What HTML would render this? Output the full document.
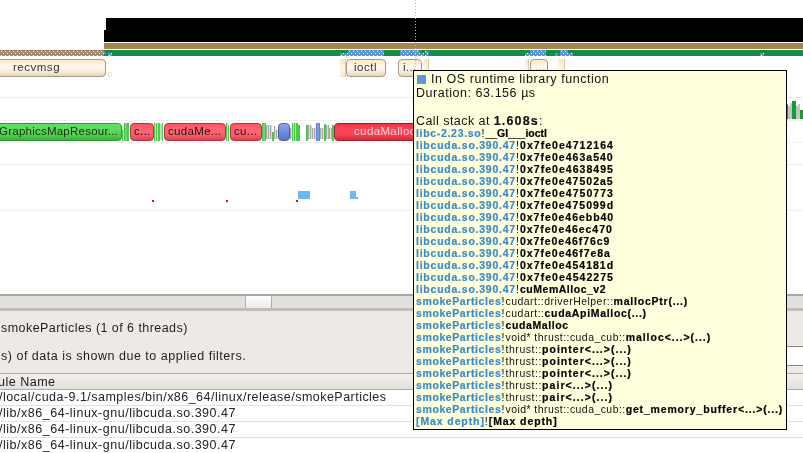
<!DOCTYPE html>
<html><head><meta charset="utf-8">
<style>
*{margin:0;padding:0;box-sizing:border-box}
html,body{width:803px;height:453px;overflow:hidden;background:#fff;position:relative;font-family:"Liberation Sans",sans-serif}
.a{position:absolute}
.os{position:absolute;top:59px;height:18px;border:1px solid #a89a80;border-radius:4px;background:linear-gradient(#fce8c8,#fffaf0 45%,#f5e8d4 78%,#e6d4b8);color:#333;font-size:11.5px;line-height:14px;text-align:left;overflow:hidden;white-space:nowrap}
.strip{position:absolute;top:59px;height:18px;background:linear-gradient(#fde6c4,#fff6ea 60%,#f2e2cc);border-right:1px solid #d8c6aa}
.cu{position:absolute;top:123px;height:18px;border-radius:4px;font-size:11.5px;line-height:15px;text-align:left;white-space:nowrap;overflow:hidden}
.g{border:1px solid #2f9a2f;background:linear-gradient(#66de66,#5ad65a 50%,#4cc44c 80%,#3cae3c);color:#143014}
.r{border:1px solid #b83040;background:linear-gradient(#ff5464,#ff6a78 45%,#f25a68 75%,#d84452);color:#2a1010}
.b{border:1px solid #4a5f9a;background:linear-gradient(#8aa4e8,#6a88d8 60%,#5a76c4)}
.sep{position:absolute;left:0;width:803px;height:1px;background:#ebebeb}
.tt{position:absolute;left:413px;top:70px;width:374px;height:360px;background:#ffffde;border:1px solid #000;overflow:hidden;white-space:nowrap}
.tt .l1{position:absolute;left:3px;font-size:12.5px;color:#111}
.st{position:absolute;left:2px;font-size:10.5px;color:#000;line-height:12px}
.st .m{font-weight:bold;color:#3b8ac6;-webkit-text-stroke:.2px #3b8ac6}
.st .fn{font-weight:bold;-webkit-text-stroke:.2px #000}
.st .ns{color:#111}
.row{position:absolute;left:0;width:803px;height:16px;border-bottom:1px solid #e2e2e2;font-size:12.5px;color:#222;white-space:nowrap}
</style></head><body><div style="position:absolute;left:0;top:0;width:803px;height:453px;will-change:transform">

<!-- vertical dotted cursor line -->


<!-- black bar -->
<div class="a" style="left:104px;top:18px;width:699px;height:24px;background:#000"></div>
<div class="a" style="left:104px;top:18px;width:2px;height:12px;background:#f4f4f4"></div>
<div class="a" style="left:415px;top:18px;width:1px;height:24px;background:repeating-linear-gradient(#888 0 1px,transparent 1px 3px)"></div>
<!-- brown bar -->
<div class="a" style="left:104px;top:43px;width:699px;height:6px;background:#a7874f"></div>
<!-- green bar -->
<div class="a" style="left:104px;top:50px;width:699px;height:6px;background:#188c46"></div>

<svg class="a" style="left:0;top:50px" width="803" height="7">
<defs>
<pattern id="pb" width="4" height="4" patternUnits="userSpaceOnUse"><rect width="4" height="4" fill="#a6856d"/><rect x="1" y="1" width="1" height="1" fill="#fff"/><rect x="3" y="3" width="1" height="1" fill="#fff"/></pattern>
<pattern id="pl" width="4" height="4" patternUnits="userSpaceOnUse"><rect width="4" height="4" fill="#5495d2"/><rect x="1" y="1" width="1" height="1" fill="#fff"/><rect x="3" y="3" width="1" height="1" fill="#fff"/></pattern>
</defs>
<rect x="0" y="0" width="104" height="6" fill="url(#pb)"/>
<rect x="104" y="2" width="2" height="2" fill="#5495d2"/>
<rect x="108" y="3" width="4" height="3" fill="url(#pl)"/>
<rect x="340" y="3" width="8" height="3" fill="url(#pl)"/>
<rect x="348" y="0" width="36" height="6" fill="url(#pl)"/>
<rect x="400" y="0" width="20" height="6" fill="url(#pl)"/>
<rect x="420" y="3" width="4" height="3" fill="url(#pl)"/>
<rect x="425" y="1" width="4" height="5" fill="url(#pl)"/>
<rect x="525" y="3" width="5" height="3" fill="url(#pl)"/>
<rect x="530" y="0" width="16" height="6" fill="url(#pl)"/>
<rect x="555" y="3" width="3" height="3" fill="#5495d2"/>
<rect x="560" y="0" width="8" height="6" fill="url(#pl)"/>
<rect x="568" y="3" width="5" height="3" fill="url(#pl)"/>
<rect x="760" y="3" width="4" height="3" fill="url(#pl)"/>
</svg>

<!-- OS runtime row -->
<div class="os" style="left:-6px;width:112px;padding-left:18px"><span style="letter-spacing:0.512px">recvmsg</span></div>
<div class="a" style="left:108px;top:72px;width:4px;height:5px;border:1px solid #f5ead8;border-left-color:#efe0c8"></div>
<div class="strip" style="left:340px;width:6px"></div>
<div class="os" style="left:346px;width:40px;padding-left:7px"><span style="letter-spacing:0.550px">ioctl</span></div>
<div class="os" style="left:398px;width:24px;text-align:left;padding-left:4px"><span style="letter-spacing:0.351px">i...</span></div>
<div class="strip" style="left:424px;width:5px"></div>
<div class="strip" style="left:525px;width:4px"></div>
<div class="os" style="left:530px;width:18px;padding-left:4px"><span style="letter-spacing:0.302px">...</span></div>
<div class="strip" style="left:558px;width:7px"></div>

<div class="a" style="left:415px;top:0;width:1px;height:70px;background:repeating-linear-gradient(#b8b8b8 0 1px,transparent 1px 3px)"></div>
<div class="sep" style="top:97px"></div>
<div class="sep" style="top:120px;background:#f0f0f0"></div>
<div class="sep" style="top:142px;background:#f2f2f2"></div>
<div class="sep" style="top:164px"></div>
<div class="sep" style="top:210px"></div>

<!-- CUDA row -->
<div class="cu g" style="left:-4px;width:126px;padding-left:2px"><span style="letter-spacing:0.237px">GraphicsMapResour...</span></div>
<div class="a" style="left:122px;top:130px;width:1px;height:11px;background:#4cc84c"></div>
<div class="a" style="left:123px;top:130px;width:1px;height:11px;background:#cfcfcf"></div>
<div class="a" style="left:124px;top:123px;width:4px;height:18px;background:linear-gradient(90deg,#3cb83c,#7ae27a 50%,#3cb83c)"></div>
<div class="a" style="left:128px;top:123px;width:1px;height:18px;background:#4cc84c"></div>
<div class="a" style="left:154px;top:123px;width:1px;height:18px;background:#4cc84c"></div>
<div class="a" style="left:155px;top:123px;width:1px;height:18px;background:#d8d8d8"></div>
<div class="a" style="left:156px;top:123px;width:1px;height:18px;background:#4cc84c"></div>
<div class="a" style="left:157px;top:123px;width:1px;height:18px;background:#d8d8d8"></div>
<div class="a" style="left:158px;top:123px;width:2px;height:18px;background:#4cc84c"></div>
<div class="a" style="left:160px;top:124px;width:2px;height:16px;background:#d0d0d0"></div>
<div class="a" style="left:162px;top:123px;width:1px;height:18px;background:#4cc84c"></div>
<div class="a" style="left:226px;top:123px;width:1px;height:18px;background:#4cc84c"></div>
<div class="a" style="left:227px;top:123px;width:1px;height:18px;background:#d8d8d8"></div>
<div class="a" style="left:228px;top:125px;width:1px;height:16px;background:#4cc84c"></div>
<div class="a" style="left:262px;top:123px;width:4px;height:18px;background:linear-gradient(90deg,#3cb83c,#7ae27a 50%,#3cb83c)"></div>
<div class="a" style="left:266px;top:125px;width:6px;height:14px;background:repeating-linear-gradient(90deg,#aaa 0 1px,#dcdcdc 1px 2px)"></div>
<div class="a" style="left:272px;top:132px;width:2px;height:9px;background:#4cc84c"></div>
<div class="a" style="left:274px;top:126px;width:2px;height:13px;background:repeating-linear-gradient(90deg,#aaa 0 1px,#dcdcdc 1px 2px)"></div>
<div class="a" style="left:276px;top:130px;width:2px;height:9px;background:repeating-linear-gradient(90deg,#aaa 0 1px,#dcdcdc 1px 2px)"></div>
<div class="a" style="left:290px;top:128px;width:2px;height:11px;background:repeating-linear-gradient(90deg,#aaa 0 1px,#dcdcdc 1px 2px)"></div>
<div class="a" style="left:292px;top:123px;width:1px;height:18px;background:#4cc84c"></div>
<div class="a" style="left:293px;top:123px;width:1px;height:18px;background:#d0d0d0"></div>
<div class="a" style="left:294px;top:123px;width:1px;height:18px;background:#4cc84c"></div>
<div class="a" style="left:295px;top:123px;width:1px;height:18px;background:#d0d0d0"></div>
<div class="a" style="left:296px;top:123px;width:2px;height:18px;background:#4cc84c"></div>
<div class="a" style="left:298px;top:125px;width:2px;height:16px;background:#4cc84c"></div>
<div class="a" style="left:306px;top:125px;width:2px;height:16px;background:#4cc84c"></div>
<div class="a" style="left:308px;top:125px;width:4px;height:14px;background:repeating-linear-gradient(90deg,#aaa 0 1px,#dcdcdc 1px 2px)"></div>
<div class="a" style="left:312px;top:128px;width:4px;height:11px;background:repeating-linear-gradient(90deg,#aaa 0 1px,#dcdcdc 1px 2px)"></div>
<div class="a" style="left:316px;top:123px;width:4px;height:18px;background:linear-gradient(90deg,#5a78c8,#8aa6ee 50%,#5a78c8)"></div>
<div class="a" style="left:320px;top:128px;width:4px;height:11px;background:repeating-linear-gradient(90deg,#aaa 0 1px,#dcdcdc 1px 2px)"></div>
<div class="a" style="left:324px;top:124px;width:2px;height:17px;background:#4cc84c"></div>
<div class="a" style="left:326px;top:125px;width:3px;height:14px;background:repeating-linear-gradient(90deg,#aaa 0 1px,#dcdcdc 1px 2px)"></div>
<div class="a" style="left:329px;top:128px;width:3px;height:11px;background:repeating-linear-gradient(90deg,#aaa 0 1px,#dcdcdc 1px 2px)"></div>
<div class="a" style="left:332px;top:125px;width:2px;height:16px;background:#4cc84c"></div>
<div class="cu r" style="left:130px;width:24px;padding-left:3px"><span style="letter-spacing:0.301px">c...</span></div>
<div class="cu r" style="left:164px;width:62px;padding-left:3px"><span style="letter-spacing:0.333px">cudaMe...</span></div>
<div class="cu r" style="left:230px;width:32px;padding-left:3px"><span style="letter-spacing:0.356px">cu...</span></div>
<div class="cu b" style="left:278px;width:12px"></div>
<div class="cu r" style="left:334px;width:90px;border-color:#a01c2c;background:linear-gradient(#f23448,#ff4858 45%,#f03c4c 75%,#cc2c3c);color:#ffd4d8;text-align:left;padding-left:19px"><span style="letter-spacing:0.370px">cudaMalloc</span></div>

<!-- right side bars -->
<div class="a" style="left:787px;top:104px;width:1px;height:15px;background:#10a030"></div>
<div class="a" style="left:788px;top:106px;width:2px;height:13px;background:#c4c0c4"></div>
<div class="a" style="left:790px;top:103px;width:2px;height:16px;background:#c8c4c8"></div>
<div class="a" style="left:792px;top:101px;width:4px;height:18px;background:#10a030"></div>
<div class="a" style="left:796px;top:106px;width:2px;height:13px;background:#c4c0c4"></div>
<div class="a" style="left:798px;top:104px;width:2px;height:15px;background:#c8c4c8"></div>
<div class="a" style="left:800px;top:110px;width:3px;height:9px;background:#10a030"></div>

<!-- marks -->
<div class="a" style="left:152px;top:200px;width:2px;height:2px;background:#f00"></div>
<div class="a" style="left:226px;top:200px;width:2px;height:2px;background:#f00"></div>
<div class="a" style="left:296px;top:200px;width:2px;height:2px;background:#f00"></div>
<div class="a" style="left:298px;top:191px;width:12px;height:8px;background:#6cb8f8"></div>
<div class="a" style="left:350px;top:191px;width:6px;height:8px;background:#6cb8f8"></div>
<div class="a" style="left:356px;top:197px;width:2px;height:2px;background:#6cb8f8"></div>

<!-- scrollbar -->
<div class="a" style="left:0;top:294px;width:803px;height:2px;background:#aaa7a3"></div>
<div class="a" style="left:0;top:296px;width:803px;height:12px;background:#e2e0dc"></div>
<div class="a" style="left:0;top:308px;width:803px;height:3px;background:#bdbdbd"></div>
<div class="a" style="left:245px;top:296px;width:27px;height:12px;border-left:1px solid #b4b0ac;border-right:1px solid #b4b0ac;background:linear-gradient(#fdfdfd,#f0ece8)"></div>

<!-- panel -->
<div class="a" style="left:0;top:311px;width:803px;height:62px;background:#edeae6"></div>
<div class="a" style="left:1px;top:321px;font-size:12.5px;color:#1e1e1e;white-space:nowrap"><span style="letter-spacing:0.446px">smokeParticles (1 of 6 threads)</span></div>
<div class="a" style="left:1px;top:349px;font-size:12.5px;color:#1e1e1e;white-space:nowrap"><span style="letter-spacing:0.514px">s) of data is shown due to applied filters.</span></div>

<div class="a" style="left:787px;top:346px;width:16px;height:20px;border-top:1px solid #8c8a88;border-bottom:1px solid #8c8a88;background:#fff"></div>
<!-- table -->
<div class="a" style="left:0;top:373px;width:803px;height:17px;border-top:1px solid #b0aca6;border-bottom:1px solid #b0aca6;background:linear-gradient(#f3f1ee,#e4e1dc)"></div>
<div class="a" style="left:-2px;top:375px;font-size:12.5px;color:#222;white-space:nowrap"><span style="letter-spacing:0.505px">ule Name</span></div>
<div class="a" style="left:0;top:390px;width:803px;height:63px;background:#fff"></div>
<div class="row" style="top:389px;height:17px"><span class="a" style="left:-1px;top:1px"><span style="letter-spacing:0.471px">/local/cuda-9.1/samples/bin/x86_64/linux/release/smokeParticles</span></span></div>
<div class="row" style="top:406px"><span class="a" style="left:-1px;top:0px"><span style="letter-spacing:0.517px">/lib/x86_64-linux-gnu/libcuda.so.390.47</span></span></div>
<div class="row" style="top:422px"><span class="a" style="left:-1px;top:0px"><span style="letter-spacing:0.517px">/lib/x86_64-linux-gnu/libcuda.so.390.47</span></span></div>
<div class="row" style="top:438px"><span class="a" style="left:-1px;top:0px"><span style="letter-spacing:0.517px">/lib/x86_64-linux-gnu/libcuda.so.390.47</span></span></div>

<!-- tooltip -->
<div class="tt">
<div class="a" style="left:3px;top:4px;width:9px;height:9px;background:#5b9bd5"></div>
<div class="l1" style="left:17px;top:1px"><span style="letter-spacing:0.549px">In OS runtime library function</span></div>
<div class="l1" style="left:2px;top:15px"><span style="letter-spacing:0.543px">Duration: 63.156 µs</span></div>
<div class="l1" style="left:2px;top:43px"><span style="letter-spacing:0.443px">Call stack at </span><b style="-webkit-text-stroke:.2px #111"><span style="letter-spacing:1.145px">1.608s</span></b><span style="letter-spacing:0.570px">:</span></div>
<div class="st" style="top:56px"><span class="m"><span style="letter-spacing:0.683px">libc-2.23.so</span></span><span class="ex"><span style="letter-spacing:1.092px">!</span></span><span class="fn"><span style="letter-spacing:-0.042px">__GI___ioctl</span></span></div>
<div class="st" style="top:68px"><span class="m"><span style="letter-spacing:0.766px">libcuda.so.390.47</span></span><span class="ex"><span style="letter-spacing:1.092px">!</span></span><span class="fn"><span style="letter-spacing:1.038px">0x7fe0e4712164</span></span></div>
<div class="st" style="top:80px"><span class="m"><span style="letter-spacing:0.766px">libcuda.so.390.47</span></span><span class="ex"><span style="letter-spacing:1.092px">!</span></span><span class="fn"><span style="letter-spacing:1.023px">0x7fe0e463a540</span></span></div>
<div class="st" style="top:92px"><span class="m"><span style="letter-spacing:0.766px">libcuda.so.390.47</span></span><span class="ex"><span style="letter-spacing:1.092px">!</span></span><span class="fn"><span style="letter-spacing:1.038px">0x7fe0e4638495</span></span></div>
<div class="st" style="top:104px"><span class="m"><span style="letter-spacing:0.766px">libcuda.so.390.47</span></span><span class="ex"><span style="letter-spacing:1.092px">!</span></span><span class="fn"><span style="letter-spacing:1.023px">0x7fe0e47502a5</span></span></div>
<div class="st" style="top:116px"><span class="m"><span style="letter-spacing:0.766px">libcuda.so.390.47</span></span><span class="ex"><span style="letter-spacing:1.092px">!</span></span><span class="fn"><span style="letter-spacing:1.038px">0x7fe0e4750773</span></span></div>
<div class="st" style="top:128px"><span class="m"><span style="letter-spacing:0.766px">libcuda.so.390.47</span></span><span class="ex"><span style="letter-spacing:1.092px">!</span></span><span class="fn"><span style="letter-spacing:1.011px">0x7fe0e475099d</span></span></div>
<div class="st" style="top:140px"><span class="m"><span style="letter-spacing:0.766px">libcuda.so.390.47</span></span><span class="ex"><span style="letter-spacing:1.092px">!</span></span><span class="fn"><span style="letter-spacing:0.972px">0x7fe0e46ebb40</span></span></div>
<div class="st" style="top:152px"><span class="m"><span style="letter-spacing:0.766px">libcuda.so.390.47</span></span><span class="ex"><span style="letter-spacing:1.092px">!</span></span><span class="fn"><span style="letter-spacing:0.952px">0x7fe0e46ec470</span></span></div>
<div class="st" style="top:164px"><span class="m"><span style="letter-spacing:0.766px">libcuda.so.390.47</span></span><span class="ex"><span style="letter-spacing:1.092px">!</span></span><span class="fn"><span style="letter-spacing:0.946px">0x7fe0e46f76c9</span></span></div>
<div class="st" style="top:176px"><span class="m"><span style="letter-spacing:0.766px">libcuda.so.390.47</span></span><span class="ex"><span style="letter-spacing:1.092px">!</span></span><span class="fn"><span style="letter-spacing:0.992px">0x7fe0e46f7e8a</span></span></div>
<div class="st" style="top:188px"><span class="m"><span style="letter-spacing:0.766px">libcuda.so.390.47</span></span><span class="ex"><span style="letter-spacing:1.092px">!</span></span><span class="fn"><span style="letter-spacing:1.011px">0x7fe0e454181d</span></span></div>
<div class="st" style="top:200px"><span class="m"><span style="letter-spacing:0.766px">libcuda.so.390.47</span></span><span class="ex"><span style="letter-spacing:1.092px">!</span></span><span class="fn"><span style="letter-spacing:1.038px">0x7fe0e4542275</span></span></div>
<div class="st" style="top:212px"><span class="m"><span style="letter-spacing:0.766px">libcuda.so.390.47</span></span><span class="ex"><span style="letter-spacing:1.092px">!</span></span><span class="fn"><span style="letter-spacing:0.516px">cuMemAlloc_v2</span></span></div>
<div class="st" style="top:224px"><span class="m"><span style="letter-spacing:0.600px">smokeParticles</span></span><span class="ex"><span style="letter-spacing:1.092px">!</span></span><span class="ns"><span style="letter-spacing:0.459px">cudart::driverHelper::</span></span><span class="fn"><span style="letter-spacing:0.772px">mallocPtr(...)</span></span></div>
<div class="st" style="top:236px"><span class="m"><span style="letter-spacing:0.600px">smokeParticles</span></span><span class="ex"><span style="letter-spacing:1.092px">!</span></span><span class="ns"><span style="letter-spacing:0.508px">cudart::</span></span><span class="fn"><span style="letter-spacing:0.685px">cudaApiMalloc(...)</span></span></div>
<div class="st" style="top:248px"><span class="m"><span style="letter-spacing:0.600px">smokeParticles</span></span><span class="ex"><span style="letter-spacing:1.092px">!</span></span><span class="fn"><span style="letter-spacing:0.612px">cudaMalloc</span></span></div>
<div class="st" style="top:260px"><span class="m"><span style="letter-spacing:0.600px">smokeParticles</span></span><span class="ex"><span style="letter-spacing:1.092px">!</span></span><span class="ns"><span style="letter-spacing:0.434px">void* thrust::cuda_cub::</span></span><span class="fn"><span style="letter-spacing:0.968px">malloc&lt;...&gt;(...)</span></span></div>
<div class="st" style="top:272px"><span class="m"><span style="letter-spacing:0.600px">smokeParticles</span></span><span class="ex"><span style="letter-spacing:1.092px">!</span></span><span class="ns"><span style="letter-spacing:0.560px">thrust::</span></span><span class="fn"><span style="letter-spacing:1.025px">pointer&lt;...&gt;(...)</span></span></div>
<div class="st" style="top:284px"><span class="m"><span style="letter-spacing:0.600px">smokeParticles</span></span><span class="ex"><span style="letter-spacing:1.092px">!</span></span><span class="ns"><span style="letter-spacing:0.560px">thrust::</span></span><span class="fn"><span style="letter-spacing:1.025px">pointer&lt;...&gt;(...)</span></span></div>
<div class="st" style="top:296px"><span class="m"><span style="letter-spacing:0.600px">smokeParticles</span></span><span class="ex"><span style="letter-spacing:1.092px">!</span></span><span class="ns"><span style="letter-spacing:0.560px">thrust::</span></span><span class="fn"><span style="letter-spacing:1.025px">pointer&lt;...&gt;(...)</span></span></div>
<div class="st" style="top:308px"><span class="m"><span style="letter-spacing:0.600px">smokeParticles</span></span><span class="ex"><span style="letter-spacing:1.092px">!</span></span><span class="ns"><span style="letter-spacing:0.560px">thrust::</span></span><span class="fn"><span style="letter-spacing:1.067px">pair&lt;...&gt;(...)</span></span></div>
<div class="st" style="top:320px"><span class="m"><span style="letter-spacing:0.600px">smokeParticles</span></span><span class="ex"><span style="letter-spacing:1.092px">!</span></span><span class="ns"><span style="letter-spacing:0.560px">thrust::</span></span><span class="fn"><span style="letter-spacing:1.067px">pair&lt;...&gt;(...)</span></span></div>
<div class="st" style="top:332px"><span class="m"><span style="letter-spacing:0.600px">smokeParticles</span></span><span class="ex"><span style="letter-spacing:1.092px">!</span></span><span class="ns"><span style="letter-spacing:0.434px">void* thrust::cuda_cub::</span></span><span class="fn"><span style="letter-spacing:0.839px">get_memory_buffer&lt;...&gt;(...)</span></span></div>
<div class="st" style="top:344px"><span class="m"><span style="letter-spacing:0.896px">[Max depth]</span></span><span class="ex"><span style="letter-spacing:1.092px">!</span></span><span class="fn"><span style="letter-spacing:0.896px">[Max depth]</span></span></div>
</div>

</div></body></html>
